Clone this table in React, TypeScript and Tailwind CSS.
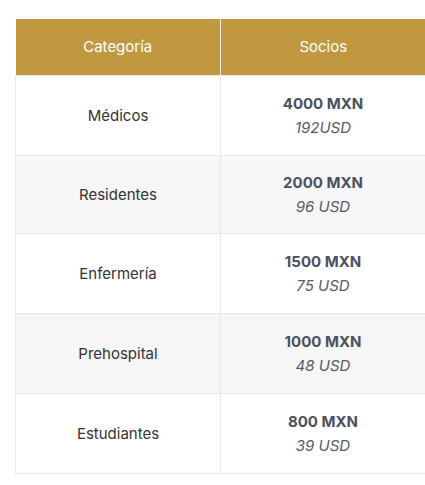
import React from "react";

type Row = { category: string; mxn: string; usd: string; tall: boolean };

const rows: Row[] = [
  { category: "Médicos", mxn: "4000 MXN", usd: "192USD", tall: true },
  { category: "Residentes", mxn: "2000 MXN", usd: "96 USD", tall: false },
  { category: "Enfermería", mxn: "1500 MXN", usd: "75 USD", tall: true },
  { category: "Prehospital", mxn: "1000 MXN", usd: "48 USD", tall: true },
  { category: "Estudiantes", mxn: "800 MXN", usd: "39 USD", tall: true },
];

export default function App() {
  return (
    <div className="w-screen min-h-screen overflow-hidden bg-white pt-[19px] pl-[15px] font-['Inter',sans-serif]">
      <table className="w-[411px] border-collapse text-center text-[15px] leading-6">
        <thead>
          <tr className="bg-[#bf983f] text-white">
            <th className="h-14 w-[205px] border-r border-[#ededed] pt-px font-normal">Categoría</th>
            <th className="h-14 pt-px font-normal">Socios</th>
          </tr>
        </thead>
        <tbody>
          {rows.map((r, i) => (
            <tr
              key={r.category}
              className={(i % 2 === 1 ? "bg-[#f6f6f6] " : "bg-white ") + (r.tall ? "h-[80px]" : "h-[78px]")}
            >
              <td className="border border-[#e8e8e8] pt-px text-[#333333]">{r.category}</td>
              <td className="border border-[#e8e8e8] pt-px">
                <div className="font-bold text-[#4a5160]">{r.mxn}</div>
                <div className="italic text-[#555b68]">{r.usd}</div>
              </td>
            </tr>
          ))}
        </tbody>
      </table>
    </div>
  );
}
